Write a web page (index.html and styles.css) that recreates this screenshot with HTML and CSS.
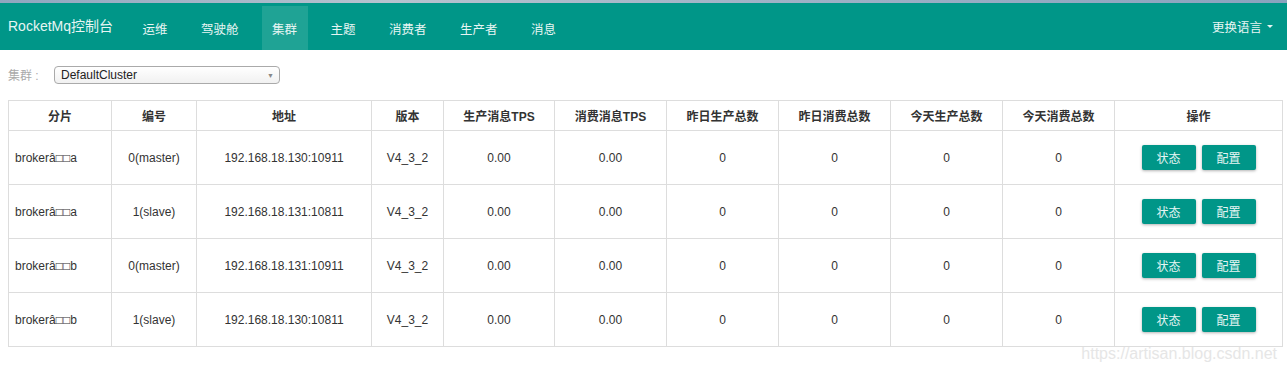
FILE: index.html
```html
<!DOCTYPE html>
<html lang="zh-CN">
<head>
  <meta charset="UTF-8">
  <title>RocketMq控制台</title>
  <link rel="stylesheet" href="styles.css">
</head>
<body>
  <div class="top-strip"></div>
  <nav class="navbar">
    <a class="brand">RocketMq控制台</a>
    <ul class="nav">
      <li>运维</li>
      <li>驾驶舱</li>
      <li class="active">集群</li>
      <li>主题</li>
      <li>消费者</li>
      <li>生产者</li>
      <li>消息</li>
    </ul>
    <div class="lang">更换语言 <span class="caret"></span></div>
  </nav>

  <div class="content">
    <div class="filter">
      <label>集群 :</label>
      <div class="select">DefaultCluster<span class="arrow">▼</span></div>
    </div>

    <table class="cluster-table">
      <colgroup>
        <col style="width:103px"><col style="width:85px"><col style="width:175px"><col style="width:72px">
        <col style="width:111px"><col style="width:112px"><col style="width:112px"><col style="width:112px">
        <col style="width:112px"><col style="width:112px"><col>
      </colgroup>
      <thead>
        <tr>
          <th>分片</th><th>编号</th><th>地址</th><th>版本</th><th>生产消息TPS</th><th>消费消息TPS</th>
          <th>昨日生产总数</th><th>昨日消费总数</th><th>今天生产总数</th><th>今天消费总数</th><th>操作</th>
        </tr>
      </thead>
      <tbody>
        <tr>
          <td class="left">brokerâ□□a</td><td>0(master)</td><td>192.168.18.130:10911</td><td>V4_3_2</td>
          <td>0.00</td><td>0.00</td><td>0</td><td>0</td><td>0</td><td>0</td>
          <td><button class="btn">状态</button><button class="btn">配置</button></td>
        </tr>
        <tr>
          <td class="left">brokerâ□□a</td><td>1(slave)</td><td>192.168.18.131:10811</td><td>V4_3_2</td>
          <td>0.00</td><td>0.00</td><td>0</td><td>0</td><td>0</td><td>0</td>
          <td><button class="btn">状态</button><button class="btn">配置</button></td>
        </tr>
        <tr>
          <td class="left">brokerâ□□b</td><td>0(master)</td><td>192.168.18.131:10911</td><td>V4_3_2</td>
          <td>0.00</td><td>0.00</td><td>0</td><td>0</td><td>0</td><td>0</td>
          <td><button class="btn">状态</button><button class="btn">配置</button></td>
        </tr>
        <tr>
          <td class="left">brokerâ□□b</td><td>1(slave)</td><td>192.168.18.130:10811</td><td>V4_3_2</td>
          <td>0.00</td><td>0.00</td><td>0</td><td>0</td><td>0</td><td>0</td>
          <td><button class="btn">状态</button><button class="btn">配置</button></td>
        </tr>
      </tbody>
    </table>
  </div>

  <div class="watermark">https://artisan.blog.csdn.net</div>
</body>
</html>
```

FILE: styles.css
```css
body {
  margin: 0;
  background: #fff;
  color: #333;
  font-family: "Liberation Sans", "Noto Sans CJK SC", sans-serif;
  font-size: 12px;
  position: relative;
  height: 369px;
  overflow: hidden;
}

.top-strip {
  height: 3px;
  background: linear-gradient(90deg, #8fa6bf, #b7c3cf 30%, #9fb2c6 60%, #8aa3be);
}

.navbar {
  height: 47px;
  background: #009688;
  display: flex;
  align-items: stretch;
  color: #e6f5f3;
  font-size: 12.5px;
}

.brand {
  padding-left: 8px;
  width: 124px;
  display: flex;
  align-items: center;
  font-size: 14px;
  margin-top: -3px;
}

.nav {
  list-style: none;
  margin: 3px 0 0 0;
  padding: 0;
  display: flex;
  gap: 12.5px;
}

.nav li {
  padding: 0 10.5px;
  display: flex;
  align-items: center;
}

.nav li.active {
  background: #1fa395;
}

.lang {
  margin-left: auto;
  margin-right: 14px;
  display: flex;
  align-items: center;
  margin-top: -1px;
}

.caret {
  display: inline-block;
  width: 0;
  height: 0;
  margin-left: 5px;
  border-left: 3px solid transparent;
  border-right: 3px solid transparent;
  border-top: 3px solid #e6f5f3;
}

.content {
  padding: 0 4px 0 8px;
}

.filter {
  display: flex;
  align-items: center;
  height: 50px;
}

.filter label {
  color: #aaa;
  width: 46px;
  margin-top: -2px;
}

.select {
  width: 213px;
  height: 16px;
  border: 1px solid #aaa;
  border-radius: 4px;
  padding: 0 5px 0 6px;
  display: flex;
  align-items: center;
  justify-content: space-between;
  background: linear-gradient(#fff, #f1f1f1);
  color: #222;
  font-size: 12px;
}

.arrow {
  font-size: 7px;
  color: #888;
}

.cluster-table {
  width: 1275px;
  table-layout: fixed;
  border-collapse: collapse;
  border: 1px solid #ddd;
}

.cluster-table th,
.cluster-table td {
  border: 1px solid #ddd;
  text-align: center;
  vertical-align: middle;
}

.cluster-table th {
  height: 27px;
  font-weight: bold;
  color: #333;
}

.cluster-table td {
  height: 51px;
  color: #333;
}

.cluster-table td.left {
  text-align: left;
  padding-left: 6px;
}

.btn {
  width: 54px;
  height: 25px;
  margin: 0 3px;
  border: 0;
  border-radius: 2px;
  background: #009688;
  color: #e6f5f3;
  font-family: inherit;
  font-size: 12px;
  box-shadow: 0 1px 3px rgba(0, 0, 0, 0.3);
}

.watermark {
  position: absolute;
  right: 10px;
  bottom: 6px;
  font-size: 16px;
  color: #e6e6e6;
}
```
